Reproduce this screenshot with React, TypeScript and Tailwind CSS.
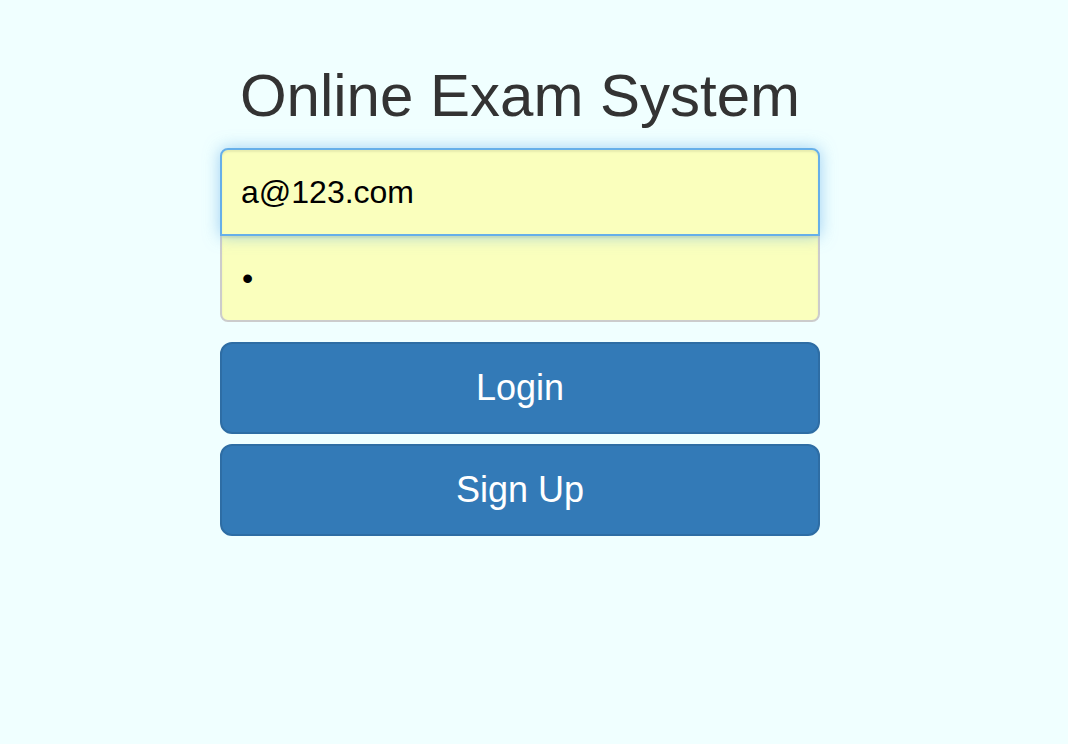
import React from "react";

export default function App() {
  return (
    <div className="min-h-[744px] w-full bg-[#f0ffff] font-['Liberation_Sans',Arial,sans-serif]">
      <form className="ml-[220px] w-[600px] pt-[63px]" onSubmit={(e) => e.preventDefault()}>
        <h2 className="mb-[19px] text-center text-[60px] font-normal leading-[66px] text-[#333333]">
          Online Exam System
        </h2>
        <input
          type="email"
          readOnly
          value="a@123.com"
          className="relative z-10 block h-[88px] w-full rounded-t-[8px] border-2 border-[#66afe9] bg-[#faffbd] px-[19px] text-[32px] text-black outline-none shadow-[inset_0_2px_2px_rgba(0,0,0,0.075),0_0_16px_rgba(102,175,233,0.6)]"
        />
        <div className="relative -mt-[2px] flex h-[88px] w-full items-center rounded-b-[8px] border-2 border-[#cccccc] bg-[#faffbd] px-[19px] text-[32px] text-black shadow-[inset_0_2px_2px_rgba(0,0,0,0.075)]">
          <span className="ml-[1px] leading-none">•</span>
        </div>
        <button
          type="submit"
          className="mt-[20px] block h-[92px] w-full rounded-[12px] border-2 border-[#2e6da4] bg-[#337ab7] text-[36px] text-white"
        >
          Login
        </button>
        <button
          type="button"
          className="mt-[10px] block h-[92px] w-full rounded-[12px] border-2 border-[#2e6da4] bg-[#337ab7] text-[36px] text-white"
        >
          Sign Up
        </button>
      </form>
    </div>
  );
}
